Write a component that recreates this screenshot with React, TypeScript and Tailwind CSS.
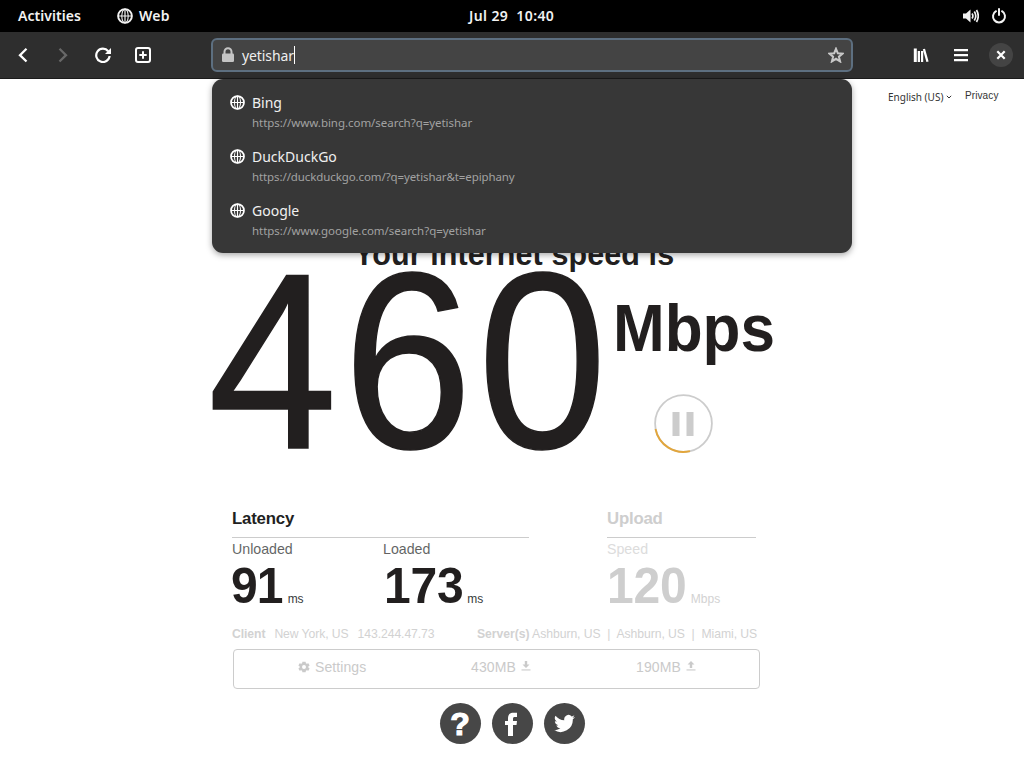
import type { ReactNode } from "react";

const UI = "font-['Noto_Sans',sans-serif]";

function Globe({ className }: { className: string }) {
  return (
    <svg viewBox="0 0 16 16" className={className} fill="none" stroke="currentColor">
      <circle cx="8" cy="8" r="6.9" strokeWidth="1.9" />
      <ellipse cx="8" cy="8" rx="3.2" ry="6.9" strokeWidth="1.1" />
      <path d="M1.2 8H14.8M8 1V15" strokeWidth="1.2" />
    </svg>
  );
}

function Gear() {
  return (
    <svg viewBox="0 0 24 24" className="h-[14px] w-[14px]" fill="currentColor">
      <path d="M19.4 13a7.5 7.5 0 0 0 0-2l2.2-1.6-2.1-3.8-2.6 1a7 7 0 0 0-1.7-1L14.8 3H9.2l-.4 2.600a7 7 0 0 0-1.700 1l-2.600-1-2.100 3.800L4.600 11a7.500 7.500 0 0 0 0 2l-2.200 1.600 2.100 3.800 2.600-1a7 7 0 0 0 1.700 1l.4 2.600h5.600l.4-2.600a7 7 0 0 0 1.700-1l2.600 1 2.100-3.800zM12 15.400a3.400 3.400 0 1 1 0-6.800 3.400 3.400 0 0 1 0 6.800z" />
    </svg>
  );
}

function Transfer() {
  return (
    <svg viewBox="0 0 10 10" className="-mt-[2px] h-[10px] w-[10px]" fill="currentColor">
      <path d="M5 7L8.500 3.600H6.200V0H3.800V3.600H1.500z" />
      <path d="M.5 8.400h9v1.100h-9z" />
    </svg>
  );
}

function TransferUp() {
  return (
    <svg viewBox="0 0 10 10" className="-mt-[2px] h-[10px] w-[10px]" fill="currentColor">
      <path d="M5 0L8.500 3.500H6.200V7H3.800V3.500H1.500z" />
      <path d="M.5 8.400h9v1.100h-9z" />
    </svg>
  );
}

function TopBar() {
  return (
    <header className="flex h-8 shrink-0 bg-black text-[14px] leading-8 font-semibold text-[#f2f2f2]">
      <div className="w-[117px] pl-[18px] tracking-[0.05px]">Activities</div>
      <div className="flex w-[352px] items-center gap-[6px]">
        <Globe className="h-4 w-4" />
        <span className="tracking-[0.3px]">Web</span>
      </div>
      <div className="flex-1 tracking-[0.400px] whitespace-pre">Jul 29  10:40</div>
      <div className="flex items-center gap-[12px] pr-[17px]">
        <svg viewBox="0 0 16 16" className="h-4 w-4">
          <path d="M0 5.500h3L7.500 1.500v13L3 10.500H0z" fill="currentColor" />
          <path d="M9 5.500q1.800 2.500 0 5M11.300 3.500q3 4.500 0 9M13.500 2q3.500 6 0 12" fill="none" stroke="currentColor" strokeWidth="1.700" />
        </svg>
        <svg viewBox="0 0 16 16" className="h-4 w-4" fill="none" stroke="currentColor" strokeWidth="2" strokeLinecap="round">
          <path d="M5 3.200a6 6 0 1 0 6 0M8 1v6" />
        </svg>
      </div>
    </header>
  );
}

const engines = [
  ["Bing", "https://www.bing.com/search?q=yetishar", "tracking-[-0.04px]"],
  ["DuckDuckGo", "https://duckduckgo.com/?q=yetishar&t=epiphany", "tracking-[-0.1px]"],
  ["Google", "https://www.google.com/search?q=yetishar", "tracking-[-0.03px]"],
];

function Suggestions() {
  return (
    <div className="absolute top-[47px] left-[1px] z-10 h-[174px] w-[640px] rounded-[11px] bg-[#373737] pt-[14px] shadow-[0_2px_6px_rgba(0,0,0,0.35)]">
      {engines.map(([name, url, track]) => (
        <div key={name} className="flex h-[54px] pl-[18px]">
          <Globe className="mt-[2px] h-[15px] w-[15px] text-white" />
          <div className="pl-[7px]">
            <div className="h-5 text-[14px] leading-5 text-[#f0f0f0]">{name}</div>
            <div className={`h-[18px] text-[11.500px] leading-[19px] text-[#a2a2a2] ${track}`}>{url}</div>
          </div>
        </div>
      ))}
    </div>
  );
}

function Toolbar() {
  return (
    <nav className="flex h-[47px] shrink-0 border-b border-[#1b1b1b] bg-[#2e2e2e] text-white">
      <div className="flex w-[211px] items-center gap-6 pl-[15px]">
        <svg viewBox="0 0 16 16" className="h-4 w-4" fill="none" stroke="currentColor" strokeWidth="2.300"><path d="M11.500 1.800L5 8.200l6.500 6.300" /></svg>
        <svg viewBox="0 0 16 16" className="h-4 w-4 text-[#686868]" fill="none" stroke="currentColor" strokeWidth="2.300"><path d="M4.500 1.800L11 8.200l-6.500 6.300" /></svg>
        <svg viewBox="0 0 16 16" className="h-4 w-4" fill="none" stroke="currentColor" strokeWidth="2.200">
          <path d="M13.200 4.200A6.700 6.700 0 1 0 14.600 9" />
          <path d="M16 1v6h-6z" fill="currentColor" stroke="none" />
        </svg>
        <svg viewBox="0 0 16 16" className="h-4 w-4" fill="none" stroke="currentColor" strokeWidth="2"><rect x="1" y="1" width="14" height="14" rx="2" /><path d="M8 4.300v7.400M4.300 8h7.400" /></svg>
      </div>
      <div className="relative w-[642px] pt-[6px]">
        <div className="flex h-[34px] items-center rounded-[6px] border-2 border-[#5d6f80] bg-[#444444] pr-[7px] pl-[8px]">
          <svg viewBox="0 0 14 16" className="mr-[7px] h-4 w-[14px] text-[#c4c4c4]">
            <path d="M3.500 7V4.800a3.500 3.500 0 0 1 7 0V7" fill="none" stroke="currentColor" strokeWidth="2" />
            <rect x="1" y="6.500" width="12" height="8.500" rx="1.300" fill="currentColor" />
          </svg>
          <span className="text-[14px] tracking-[-0.1px] text-[#eeeeee]">yetishar</span>
          <span className="h-[18px] w-px bg-white" />
          <svg viewBox="0 0 16 16" className="ml-auto h-4 w-4 text-[#c8c8c8]" fill="none" stroke="currentColor" strokeWidth="2">
            <path d="M8 1.800l1.800 4.400 4.800.4-3.700 3.100 1.200 4.700L8 11.800l-4.100 2.600 1.200-4.700-3.700-3.100 4.800-.4z" />
          </svg>
        </div>
        <Suggestions />
      </div>
      <div className="flex flex-1 items-center justify-end pr-[11px]">
        <svg viewBox="0 0 16 16" className="mr-6 h-4 w-4" fill="currentColor">
          <path d="M.8 1.500h3V15h-3zM4.700 4h2.300v11H4.700zM8 4h2.200v11H8zM9.800 2.200l2.200-.5L15.600 14.500l-2.200.5z" />
        </svg>
        <svg viewBox="0 0 16 16" className="mr-5 h-4 w-4" fill="currentColor"><path d="M1 2h14v2.200H1zM1 7h14v2.200H1zM1 12h14v2.200H1z" /></svg>
        <span className="flex h-6 w-6 items-center justify-center rounded-full bg-[#444444]">
          <svg viewBox="0 0 10 10" className="h-[10px] w-[10px]" stroke="currentColor" strokeWidth="2.200"><path d="M1.300 1.300l7.400 7.400M8.700 1.300L1.300 8.700" /></svg>
        </span>
      </div>
    </nav>
  );
}

function Metric({ label, value, unit, className = "", valueClass = "", unitClass }: { label: string; value: string; unit: string; className?: string; valueClass?: string; unitClass: string }) {
  return (
    <div className={className}>
      <div className="h-[22px] text-[14.200px] leading-[22px] opacity-70">{label}</div>
      <div className="flex h-[52px] items-baseline">
        <span className={`inline-block origin-left scale-x-[0.960] text-[50px] leading-[52px] font-bold ${valueClass}`}>{value}</span>
        <span className={`text-[12px] opacity-90 ${unitClass}`}>{unit}</span>
      </div>
    </div>
  );
}

function RoundLink({ children }: { children: ReactNode }) {
  return <span className="flex h-[41px] w-[41px] items-center justify-center rounded-full bg-[#474747] text-white">{children}</span>;
}

export default function App() {
  return (
    <div className={`flex h-[768px] w-[1024px] flex-col overflow-hidden bg-white ${UI}`}>
      <TopBar />
      <Toolbar />
      <main className="flex flex-1 flex-col font-['Liberation_Sans',Arial,sans-serif] text-[#221f1f]">
        <div className="flex h-[155px] items-start pl-[888px] text-[#333333]">
          <div className="flex w-[77px] items-center pt-[9px] font-['Noto_Sans',sans-serif] text-[10px] leading-[18px] tracking-[0px]">
            English (US)
            <svg viewBox="0 0 6 6" className="ml-[3px] h-[6px] w-[6px]" fill="none" stroke="currentColor"><path d="M.8 1.800L3 4l2.200-2.200" /></svg>
          </div>
          <span className="pt-[8px] text-[10px] leading-[18px] tracking-[0.1px]">Privacy</span>
        </div>
        <h1 className="h-[38px] pl-[354px] text-[30.500px] leading-10 font-bold tracking-[0.1px]">Your internet speed is</h1>
        <section className="flex h-[238px] pl-[208px]">
          <div className="w-[405px] pt-[2px]">
            <span className="inline-block origin-left scale-x-[0.930] text-[250px] leading-[176px] tracking-[6px] [-webkit-text-stroke:1.500px_#221f1f]">460</span>
          </div>
          <div className="pt-[23px]">
            <div className="h-[66px] w-[170px] origin-left scale-x-[0.940] text-[66px] leading-[66px] font-bold">Mbps</div>
            <svg viewBox="0 0 60 60" className="mt-[32px] ml-[41px] h-[60px] w-[60px]" fill="none">
              <circle cx="29.5" cy="30.5" r="28.400" stroke="#cccccc" strokeWidth="1.800" />
              <path d="M1.500 36A28.400 28.400 0 0 0 36 58.100" stroke="#e2a63c" strokeWidth="1.900" />
              <path d="M18.500 19h7v24h-7zM32.500 19h7v24h-7z" fill="#cccccc" />
            </svg>
          </div>
        </section>
        <section className="flex h-[117px] pl-[232px]">
          <div className="w-[375px]">
            <h2 className="h-[28px] w-[297px] border-b border-[#cccccc] text-[16.800px] leading-[17px] font-bold tracking-[-0.2px]">Latency</h2>
            <div className="flex">
              <Metric label="Unloaded" value="91" unit="ms" className="w-[151px]" valueClass="-ml-px tracking-[-1px]" unitClass="ml-[3px]" />
              <Metric label="Loaded" value="173" unit="ms" valueClass="tracking-[-0.2px] pl-[1px]" unitClass="ml-[0.500px]" />
            </div>
          </div>
          <div className="text-[#cecece]">
            <h2 className="h-[28px] w-[149px] border-b border-[#cccccc] text-[16.800px] leading-[17px] font-bold tracking-[-0.2px]">Upload</h2>
            <Metric label="Speed" value="120" unit="Mbps" valueClass="tracking-[-0.2px]" unitClass="ml-[1px]" />
          </div>
        </section>
        <div className="flex h-[22px] pl-[232px] text-[12.200px] leading-[14px] whitespace-pre text-[#d2d2d2]">
          <div className="flex w-[245px] gap-[9px] tracking-[-0.08px]"><b>Client</b><span>New York, US</span><span>143.244.47.73</span></div>
          <div className="tracking-[-0.05px]"><b>Server(s)</b> Ashburn, US  |  Ashburn, US  |  Miami, US</div>
        </div>
        <div className="ml-[233px] flex h-[40px] w-[527px] shrink-0 items-start rounded-[4px] border border-[#cccccc] pt-[8px] text-[14px] leading-[18px] text-[#cacaca]">
          <div className="flex w-[237px] items-center gap-[4px] pl-[63px] tracking-[0.08px]"><Gear />Settings</div>
          <div className="flex w-[165px] items-center gap-[5px] tracking-[0.1px]">430MB<Transfer /></div>
          <div className="flex items-center gap-[5px] tracking-[0.1px]">190MB<TransferUp /></div>
        </div>
        <footer className="mt-[14px] flex gap-[11px] pl-[439.500px]">
          <RoundLink><span className="text-[32px] leading-none font-bold [-webkit-text-stroke:1.200px_white]">?</span></RoundLink>
          <RoundLink><svg viewBox="0 0 24 24" className="h-[24px] w-[24px]" fill="currentColor"><path d="M8 24V13H5V9h3V6.500C8 2.500 10 .800 13.500.800H17V5h-2c-1.600 0-2 .6-2 2v2h4l-.5 4H13v11z" /></svg></RoundLink>
          <RoundLink><svg viewBox="0 0 24 24" className="h-[21px] w-[21px]" fill="currentColor"><path d="M24 4.600a10 10 0 0 1-2.800.8 5 5 0 0 0 2.100-2.700 10 10 0 0 1-3.100 1.200 4.900 4.900 0 0 0-8.400 4.500A14 14 0 0 1 1.700 3.200a4.900 4.900 0 0 0 1.500 6.500 4.900 4.900 0 0 1-2.200-.6 4.900 4.900 0 0 0 3.900 4.900 5 5 0 0 1-2.200.1 4.900 4.900 0 0 0 4.600 3.400A10 10 0 0 1 0 19.500 14 14 0 0 0 21.500 7.100 10 10 0 0 0 24 4.600z" /></svg></RoundLink>
        </footer>
      </main>
    </div>
  );
}
